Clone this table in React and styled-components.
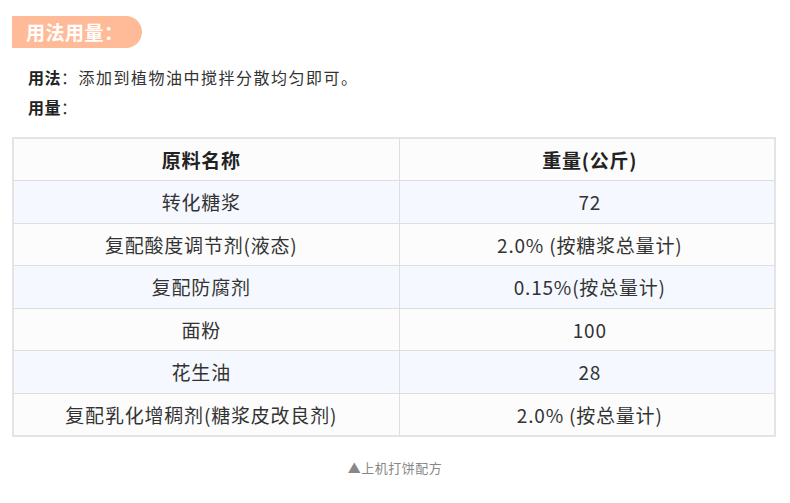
import React from "react";
import styled, { createGlobalStyle } from "styled-components";

const Global = createGlobalStyle`
  html, body { margin: 0; padding: 0; background: #fff; }
  body { font-family: "Noto Sans CJK SC", "Noto Sans", sans-serif; color: #333; }
`;

const Page = styled.div`
  width: 790px;
  padding: 16px 0 0 12px;
  box-sizing: border-box;
`;

const Badge = styled.div`
  width: 130px;
  height: 32px;
  box-sizing: border-box;
  padding-left: 14px;
  background: #ffbb98;
  border-radius: 0 16px 16px 0;
  color: #fff;
  font-weight: 700;
  font-size: 19px;
  line-height: 32px;
  letter-spacing: 0.5px;
`;

const Info = styled.div`
  margin-top: 14px;
  padding-left: 16px;
`;

const Line = styled.div`
  font-size: 16px;
  line-height: 30px;
  letter-spacing: 1.5px;
  color: #333;
`;

const Label = styled.b`
  font-weight: 700;
  color: #222;
  letter-spacing: 0.5px;
`;

const Table = styled.table`
  margin-top: 15px;
  width: 764px;
  border-collapse: collapse;
  border: 2px solid #e4e4e4;
  table-layout: fixed;
`;

const Row = styled.tr`
  height: 42.5px;
  background: ${(p) => (p.$tint ? "#f5f9ff" : "#fcfcfc")};
`;

const Cell = styled.td`
  border: 1px solid #dedede;
  text-align: center;
  vertical-align: middle;
  font-size: 19px;
  letter-spacing: 0.8px;
  color: #333;
  padding: ${(p) => (p.$side === "left" ? "0 10px 0 0" : "0 0 0 6px")};
  font-weight: ${(p) => (p.$head ? 700 : 400)};
  ${(p) => (p.$head ? "color:#222;" : "")}
`;

const Footer = styled.div`
  margin-top: 21px;
  margin-left: -12px;
  text-align: center;
  font-size: 13px;
  letter-spacing: 0.5px;
  color: #888;
`;

const rows = [
  ["转化糖浆", "72"],
  ["复配酸度调节剂(液态)", "2.0% (按糖浆总量计)"],
  ["复配防腐剂", "0.15%(按总量计)"],
  ["面粉", "100"],
  ["花生油", "28"],
  ["复配乳化增稠剂(糖浆皮改良剂)", "2.0% (按总量计)"],
];

export default function App() {
  return (
    <>
      <Global />
      <Page>
        <Badge>用法用量：</Badge>
        <Info>
          <Line>
            <Label>用法</Label>：添加到植物油中搅拌分散均匀即可。
          </Line>
          <Line>
            <Label>用量</Label>：
          </Line>
        </Info>
        <Table>
          <colgroup>
            <col style={{ width: 386 }} />
            <col />
          </colgroup>
          <tbody>
            <Row>
              <Cell $head $side="left">原料名称</Cell>
              <Cell $head $side="right">重量(公斤)</Cell>
            </Row>
            {rows.map((r, i) => (
              <Row key={i} $tint={i % 2 === 0}>
                <Cell $side="left">{r[0]}</Cell>
                <Cell $side="right">{r[1]}</Cell>
              </Row>
            ))}
          </tbody>
        </Table>
        <Footer>▲上机打饼配方</Footer>
      </Page>
    </>
  );
}
